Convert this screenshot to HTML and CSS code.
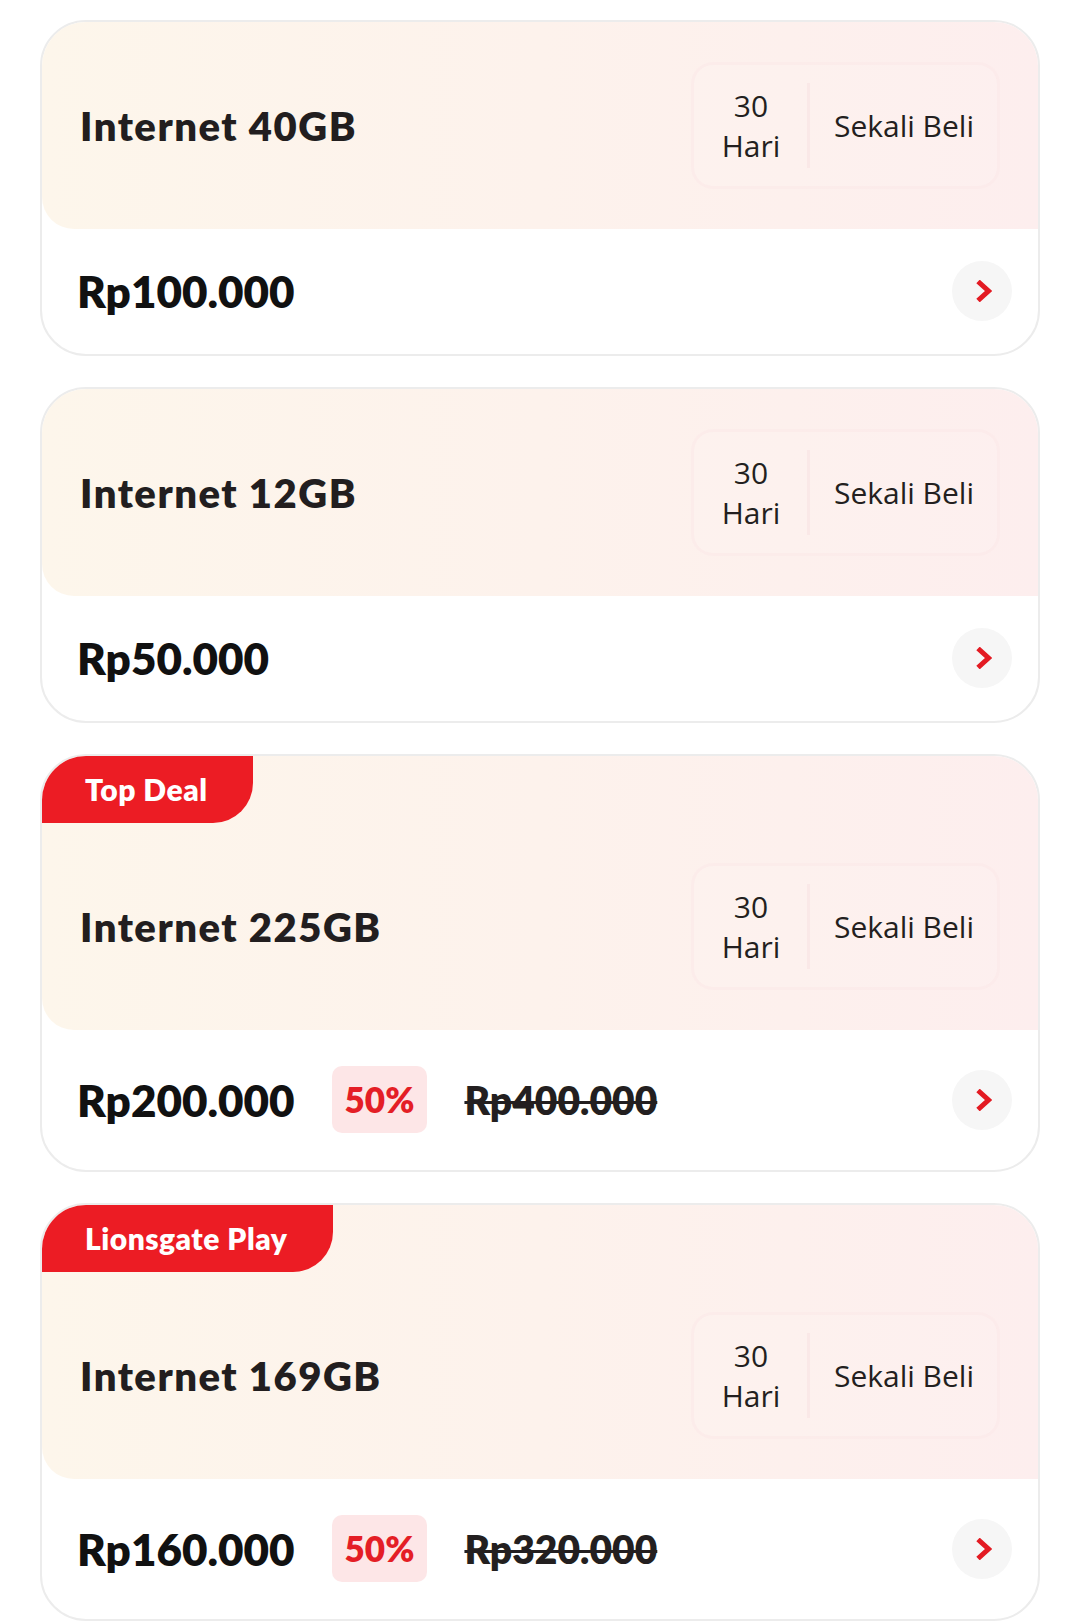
FILE: index.html
```html
<!DOCTYPE html>
<html lang="en">
<head>
    <meta charset="UTF-8">
    <meta name="viewport" content="width=device-width, initial-scale=1.0">
    <title>Paket Internet</title>
    <link rel="stylesheet" href="styles.css">
</head>
<body>

    <main class="list">

        <article class="card">
            <div class="card-head">
                <div class="head-row">
                    <h2 class="title">Internet 40GB</h2>
                    <div class="terms">
                        <div class="term term-days">30<br>Hari</div>
                        <div class="term">Sekali Beli</div>
                    </div>
                </div>
            </div>
            <div class="card-foot">
                <div class="prices">
                    <span class="price">Rp100.000</span>
                </div>
                <span class="go"><svg viewBox="0 0 16 22" width="16" height="22"><path d="M2 1.5 L12.5 11 L2 20.5" /></svg></span>
            </div>
        </article>

        <article class="card">
            <div class="card-head">
                <div class="head-row">
                    <h2 class="title">Internet 12GB</h2>
                    <div class="terms">
                        <div class="term term-days">30<br>Hari</div>
                        <div class="term">Sekali Beli</div>
                    </div>
                </div>
            </div>
            <div class="card-foot">
                <div class="prices">
                    <span class="price">Rp50.000</span>
                </div>
                <span class="go"><svg viewBox="0 0 16 22" width="16" height="22"><path d="M2 1.5 L12.5 11 L2 20.5" /></svg></span>
            </div>
        </article>

        <article class="card">
            <div class="card-head">
                <div class="tag">Top Deal</div>
                <div class="head-row">
                    <h2 class="title">Internet 225GB</h2>
                    <div class="terms">
                        <div class="term term-days">30<br>Hari</div>
                        <div class="term">Sekali Beli</div>
                    </div>
                </div>
            </div>
            <div class="card-foot">
                <div class="prices">
                    <span class="price">Rp200.000</span>
                    <span class="discount">50%</span>
                    <s class="old-price">Rp400.000</s>
                </div>
                <span class="go"><svg viewBox="0 0 16 22" width="16" height="22"><path d="M2 1.5 L12.5 11 L2 20.5" /></svg></span>
            </div>
        </article>

        <article class="card">
            <div class="card-head">
                <div class="tag">Lionsgate Play</div>
                <div class="head-row">
                    <h2 class="title">Internet 169GB</h2>
                    <div class="terms">
                        <div class="term term-days">30<br>Hari</div>
                        <div class="term">Sekali Beli</div>
                    </div>
                </div>
            </div>
            <div class="card-foot">
                <div class="prices">
                    <span class="price">Rp160.000</span>
                    <span class="discount">50%</span>
                    <s class="old-price">Rp320.000</s>
                </div>
                <span class="go"><svg viewBox="0 0 16 22" width="16" height="22"><path d="M2 1.5 L12.5 11 L2 20.5" /></svg></span>
            </div>
        </article>

    </main>

</body>
</html>
```

FILE: styles.css
```css
body { margin: 0; padding: 20px 31px 0 40px; background: #fff; font-family: "Open Sans", "Noto Sans", sans-serif; color: #231f20; }

.card { border: 2px solid #ececec; border-radius: 46px; overflow: hidden; margin-bottom: 31px; background: #fff; }

.card-head { background: linear-gradient(90deg, #fdf6eb 0%, #fdf2ec 50%, #fdeeee 100%); border-bottom-left-radius: 32px; }
.head-row { display: flex; align-items: center; justify-content: space-between; padding: 40px 38px 40px 38px; }
.title { margin: 0; font-family: Lato, sans-serif; font-weight: 800; font-size: 40px; letter-spacing: 1.5px; color: #221e1f; }

.tag { display: inline-block; height: 67px; line-height: 67px; padding: 0 46px 0 43px; background: #ec1c24; color: #fff; font-family: Lato, sans-serif; font-weight: 800; font-size: 30px; letter-spacing: 0.5px; border-bottom-right-radius: 40px; }

.terms { display: flex; height: 127px; box-sizing: border-box; border: 3px solid rgba(250, 228, 228, 0.45); border-radius: 22px; background: rgba(255, 255, 255, 0.1); }
.term { display: flex; align-items: center; justify-content: center; padding: 0 23px 0 26px; font-size: 30px; line-height: 40px; text-align: center; color: #231f20; }
.term-days { width: 114px; padding: 0; box-sizing: border-box; position: relative; }
.term-days::after { content: ""; position: absolute; right: -2px; top: 18px; bottom: 18px; width: 3px; background: rgba(248, 226, 226, 0.6); }

.card-foot { display: flex; align-items: center; justify-content: space-between; padding: 32px 26px 33px 35px; }
.prices { display: flex; align-items: center; gap: 37px; }
.price { font-family: Lato, sans-serif; font-weight: 800; font-size: 44px; color: #111; }
.discount { height: 67px; line-height: 67px; margin: 4px 0; padding: 0 13px; border-radius: 10px; background: #fde6e7; color: #e41e26; font-family: Lato, sans-serif; font-weight: 800; font-size: 35px; }
.old-price { font-family: Lato, sans-serif; font-weight: 800; font-size: 39px; color: #231f20; text-decoration-thickness: 3px; }

.go { width: 60px; height: 60px; border-radius: 50%; background: #f6f6f6; display: flex; align-items: center; justify-content: center; }
.go svg { fill: none; stroke: #e31b23; stroke-width: 5; margin-left: 3px; }
```
